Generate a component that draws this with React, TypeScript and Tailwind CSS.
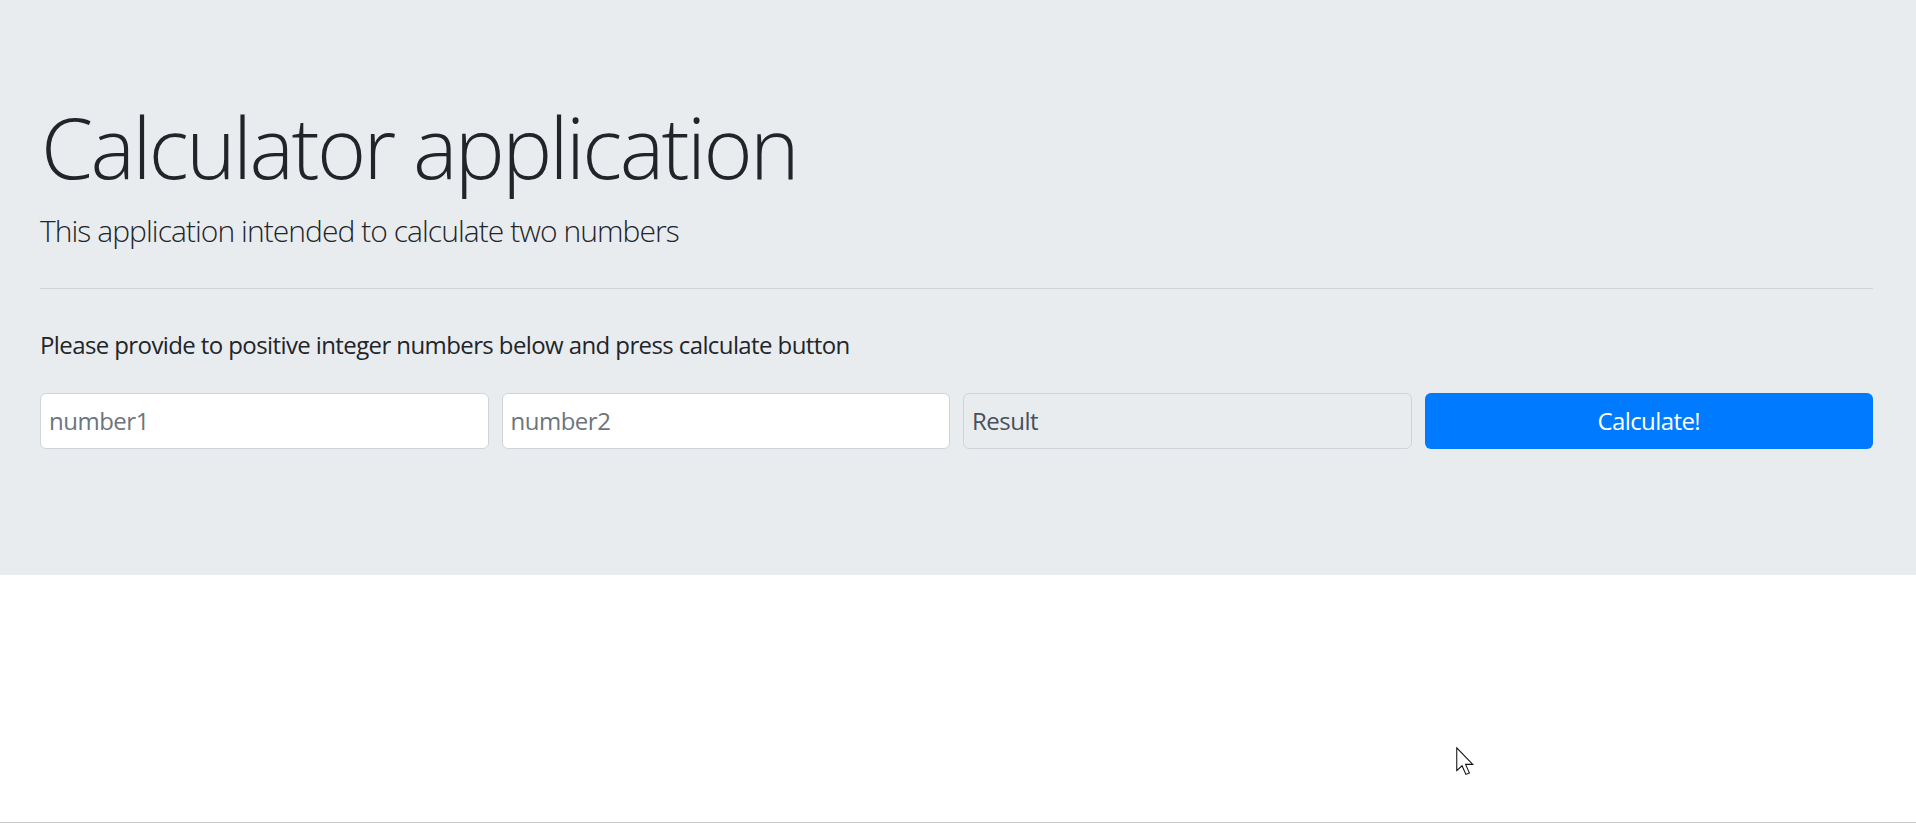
export default function App() {
  const font = { fontFamily: '"Open Sans", "Noto Sans", Arial, sans-serif' };
  const inputCls =
    "h-[56px] rounded-[6px] border border-[#ced4da] px-[8px] text-[24px] tracking-[-0.5px] text-[#495057] placeholder:text-[#6c757d] outline-none";
  return (
    <div className="relative min-h-[823px] bg-white border-b border-[#c8c8c8] text-[#212529]" style={font}>
      {/* Jumbotron */}
      <div className="bg-[#e9ecef] pl-[40px] pr-[43px] pt-[97px] pb-[126px]">
        <h1 className="text-[84px] font-light leading-[1.2] tracking-[-2.6px] ml-[1px]">Calculator application</h1>
        <p className="text-[30px] font-light leading-[1.5] mt-[10px] tracking-[-0.95px]">
          This application intended to calculate two numbers
        </p>
        <hr className="mt-[35px] border-t border-[#cfd3d7]" />
        <p className="text-[24px] leading-[1.5] mt-[38px] tracking-[-0.6px]">
          Please provide to positive integer numbers below and press calculate button
        </p>
        <div className="grid grid-cols-4 gap-[13px] mt-[30px]">
          <input className={`${inputCls} bg-white`} placeholder="number1" />
          <input className={`${inputCls} bg-white`} placeholder="number2" />
          <input readOnly className={`${inputCls} bg-[#e9ecef]`} value="Result" />
          <button className="h-[56px] rounded-[6px] bg-[#007bff] text-white text-[24px] tracking-[-0.6px]">
            Calculate!
          </button>
        </div>
      </div>

      {/* mouse pointer */}
      <svg
        className="absolute left-[1456px] top-[747px]"
        width="19"
        height="29"
        viewBox="0 0 12.5 19"
      >
        <path
          d="M0.5 0.5 L0.5 15.5 L4 12.3 L6.5 18 L8.8 17 L6.3 11.4 L11 11.4 Z"
          fill="white"
          stroke="#111"
          strokeWidth="0.7"
          strokeLinejoin="miter"
        />
      </svg>
    </div>
  );
}
